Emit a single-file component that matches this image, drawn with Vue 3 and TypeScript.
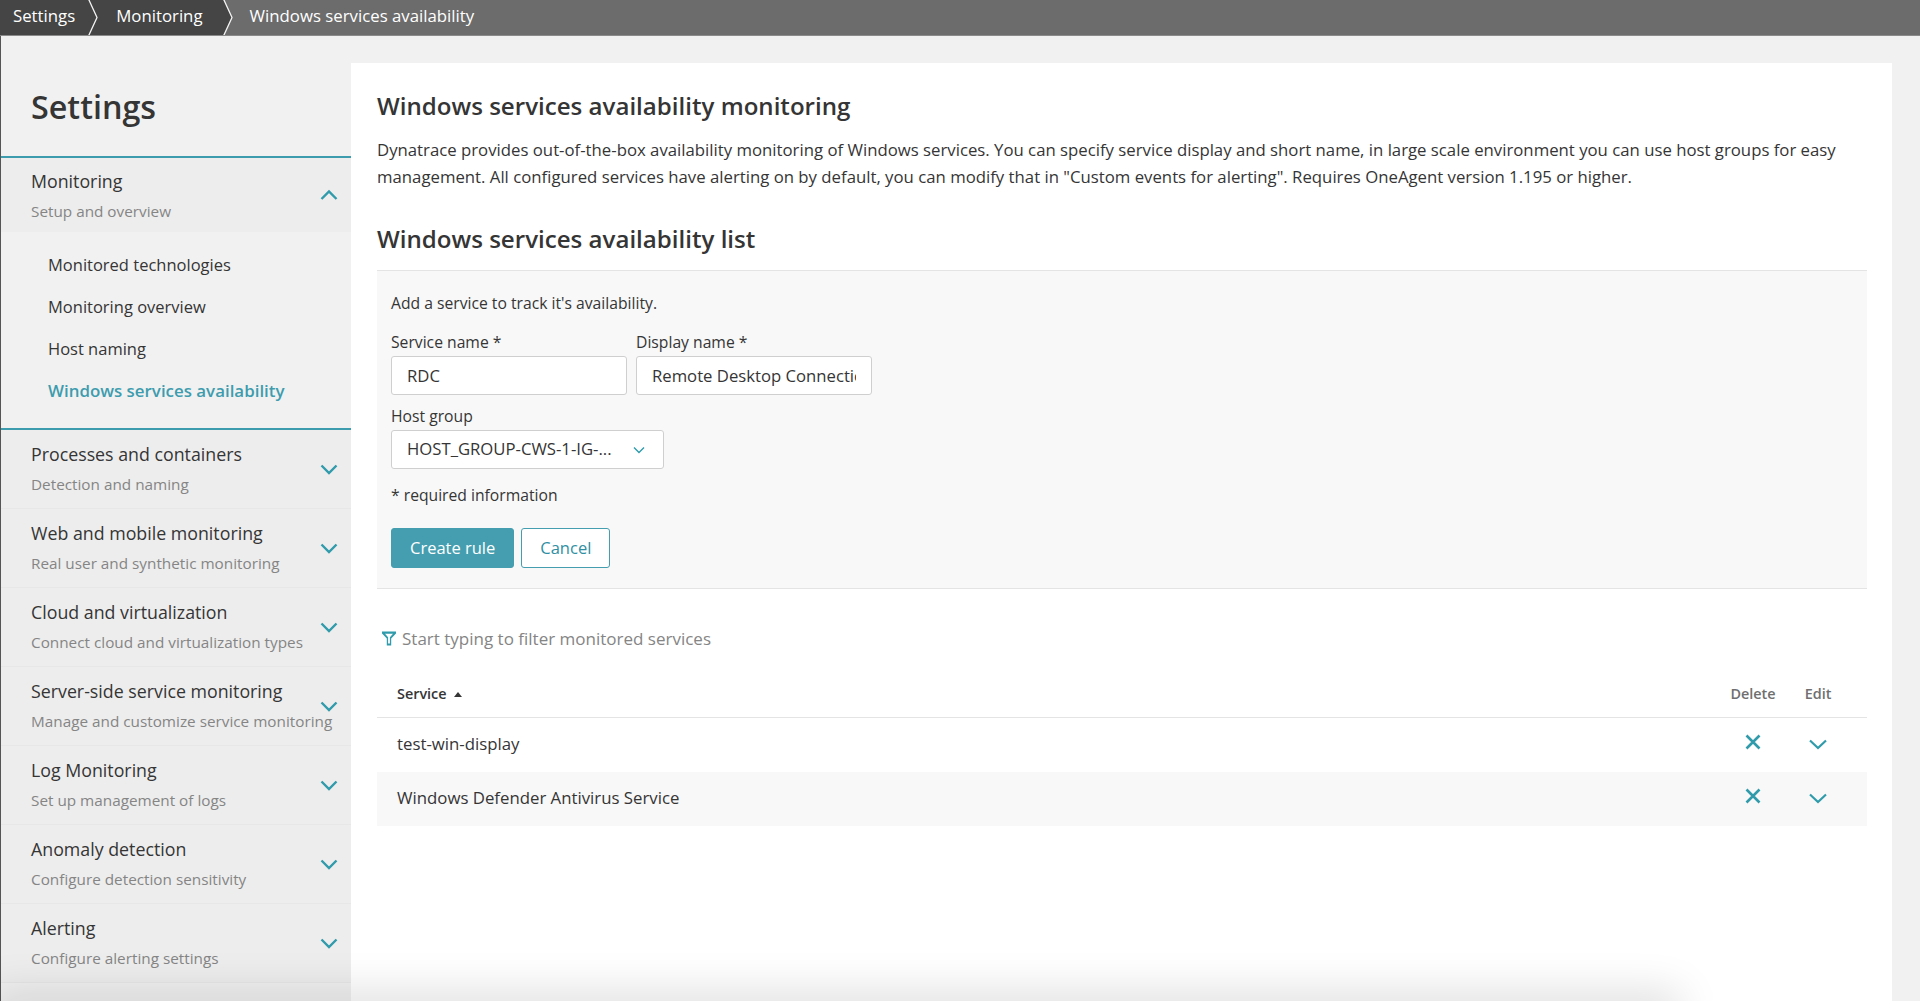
<script setup lang="ts">
interface NavGroup {
  title: string
  sub: string
}

const navLinks = ['Monitored technologies', 'Monitoring overview', 'Host naming', 'Windows services availability']

const navGroups: NavGroup[] = [
  { title: 'Processes and containers', sub: 'Detection and naming' },
  { title: 'Web and mobile monitoring', sub: 'Real user and synthetic monitoring' },
  { title: 'Cloud and virtualization', sub: 'Connect cloud and virtualization types' },
  { title: 'Server-side service monitoring', sub: 'Manage and customize service monitoring' },
  { title: 'Log Monitoring', sub: 'Set up management of logs' },
  { title: 'Anomaly detection', sub: 'Configure detection sensitivity' },
  { title: 'Alerting', sub: 'Configure alerting settings' },
]

const services = ['test-win-display', 'Windows Defender Antivirus Service']
</script>

<template>
  <div class="page">
    <header class="topbar">
      <span class="crumb first">Settings</span>
      <svg class="crumb-arrow dark" width="12" height="35" viewBox="0 0 12 35">
        <path d="M0 0H2.500L11 17.500L2.500 35H0Z" fill="#454545" />
        <path d="M2.500 -1L11 17.500L2.500 36" fill="none" stroke="#f4f4f4" stroke-width="1.300" />
      </svg>
      <span class="crumb second">Monitoring</span>
      <svg class="crumb-arrow" width="12" height="35" viewBox="0 0 12 35">
        <path d="M0 0H2.500L11 17.500L2.500 35H0Z" fill="#454545" />
        <path d="M2.500 -1L11 17.500L2.500 36" fill="none" stroke="#f4f4f4" stroke-width="1.300" />
      </svg>
      <span class="crumb current">Windows services availability</span>
    </header>

    <div class="content">
      <aside class="sidebar">
        <h1 class="side-title">Settings</h1>

        <section class="nav-open">
          <div class="nav-item active">
            <div class="nav-text">
              <div class="nav-title">Monitoring</div>
              <div class="nav-sub">Setup and overview</div>
            </div>
            <svg class="nav-chev" width="18" height="12" viewBox="0 0 18 12">
              <path d="M1.500 10L9 2.500L16.500 10" fill="none" stroke="#2f9bab" stroke-width="2.400" />
            </svg>
          </div>
          <ul class="nav-links">
            <li v-for="(link, i) in navLinks" :key="link" :class="{ selected: i === 3 }">{{ link }}</li>
          </ul>
        </section>

        <div v-for="group in navGroups" :key="group.title" class="nav-item">
          <div class="nav-text">
            <div class="nav-title">{{ group.title }}</div>
            <div class="nav-sub">{{ group.sub }}</div>
          </div>
          <svg class="nav-chev" width="18" height="12" viewBox="0 0 18 12">
            <path d="M1.500 2.500L9 10L16.500 2.500" fill="none" stroke="#2f9bab" stroke-width="2.400" />
          </svg>
        </div>
      </aside>

      <main class="panel">
        <h2 class="heading first">Windows services availability monitoring</h2>
        <p class="intro">
          Dynatrace provides out-of-the-box availability monitoring of Windows services. You can specify service display and short name, in large scale environment you can use host groups for easy management. All configured services have alerting on by default, you can modify that in "Custom events for alerting". Requires OneAgent version 1.195 or higher.
        </p>
        <h2 class="heading second">Windows services availability list</h2>

        <form class="rule-form" @submit.prevent>
          <p class="form-hint">Add a service to track it's availability.</p>
          <div class="field-row">
            <label class="field">
              <span class="field-label">Service name *</span>
              <input class="input name-input" value="RDC" readonly />
            </label>
            <label class="field">
              <span class="field-label">Display name *</span>
              <input class="input display-input" value="Remote Desktop Connection" readonly />
            </label>
          </div>
          <div class="field host-field">
            <span class="field-label">Host group</span>
            <span class="input select">
              <span>HOST_GROUP-CWS-1-IG-...</span>
              <svg width="12" height="8" viewBox="0 0 12 8">
                <path d="M1 1.500L6 6.500L11 1.500" fill="none" stroke="#2f9bab" stroke-width="1.400" />
              </svg>
            </span>
          </div>
          <p class="required">* required information</p>
          <div class="actions">
            <button class="btn primary" type="button">Create rule</button>
            <button class="btn" type="button">Cancel</button>
          </div>
        </form>

        <div class="filter">
          <svg width="16" height="15" viewBox="0 0 16 15">
            <path d="M1 0.500H15V2.500L10.200 7.500V14.500H5.800V7.500L1 2.500Z" fill="#2f9bab" />
            <path d="M4 2.800H12L8.900 6.200V12.500H7.100V6.200Z" fill="#fff" />
          </svg>
          <span>Start typing to filter monitored services</span>
        </div>

        <div class="table-head">
          <span class="col-service">Service <i class="sort" /></span>
          <span class="col-delete">Delete</span>
          <span class="col-edit">Edit</span>
        </div>
        <div v-for="(service, i) in services" :key="service" class="table-row" :class="{ odd: i === 1 }">
          <span class="col-service">{{ service }}</span>
          <span class="col-delete">
            <svg class="delete-x" width="16" height="16" viewBox="0 0 16 16">
              <path d="M1.500 1.500L14.500 14.500M14.500 1.500L1.500 14.500" fill="none" stroke="#2f9bab" stroke-width="2.600" />
            </svg>
          </span>
          <span class="col-edit">
            <svg class="edit-chev" width="18" height="11" viewBox="0 0 18 11">
              <path d="M1 1.500L9 9L17 1.500" fill="none" stroke="#2f9bab" stroke-width="2.200" />
            </svg>
          </span>
        </div>
      </main>
    </div>

    <div class="fade" />
  </div>
</template>

<style>
html,
body {
  margin: 0;
  background: #f1f1f1;
}
</style>

<style scoped>
.page {
  position: relative;
  height: 1001px;
  overflow: hidden;
  display: flex;
  flex-direction: column;
  font-family: "Open Sans", "Noto Sans", sans-serif;
  color: #353535;
  background: #f1f1f1;
}

.topbar {
  flex: none;
  display: flex;
  align-items: center;
  height: 35px;
  background: #6c6c6c;
  border-bottom: 1px solid #8a8a8a;
  color: #fff;
  font-size: 16.800px;
}

.crumb {
  height: 35px;
  line-height: 32px;
  background: #454545;
}

.crumb.first {
  padding: 0 11px 0 13px;
}

.crumb.second {
  padding: 0 18px 0 18px;
}

.crumb-arrow {
  flex: none;
}

.crumb-arrow.dark {
  background: #454545;
}

.crumb.current {
  background: none;
  padding-left: 17px;
}

.content {
  flex: 1;
  display: flex;
  min-height: 0;
  border-left: 1.500px solid #555;
}

.sidebar {
  flex: none;
  width: 350px;
}

.side-title {
  margin: 0;
  padding: 49px 0 0 30px;
  height: 71px;
  line-height: 42px;
  font-size: 32.300px;
  font-weight: 600;
  color: #353535;
}

.nav-open {
  border-top: 2px solid #3d9cae;
  border-bottom: 2px solid #3d9cae;
}

.nav-item {
  display: flex;
  align-items: center;
  justify-content: space-between;
  height: 78px;
  padding: 0 13px 0 30px;
  background: #ededed;
  border-bottom: 1px solid #e7e7e7;
}

.nav-item.active {
  height: 74px;
  border-bottom: 0;
}

.nav-item.active .nav-text {
  padding-top: 1px;
}

.nav-text {
  flex: 1;
  width: 0;
}

.nav-chev {
  flex: none;
}

.nav-title {
  font-size: 17.800px;
  line-height: 24px;
  color: #353535;
  margin-top: -1px;
}

.nav-sub {
  margin-top: 7px;
  font-size: 15.300px;
  line-height: 22px;
  color: #858585;
  white-space: nowrap;
}

.nav-links {
  list-style: none;
  margin: 0;
  padding: 12px 0 16px 47px;
  font-size: 16.500px;
}

.nav-links li {
  height: 42px;
  line-height: 42px;
}

.nav-links li.selected {
  font-weight: 600;
  color: #3d9cae;
  font-size: 16.900px;
}

.panel {
  flex: none;
  width: 1541px;
  box-sizing: border-box;
  margin-top: 27px;
  padding: 0 25px 0 26px;
  background: #fff;
}

.heading {
  margin: 0;
  font-size: 24.100px;
  font-weight: 600;
  line-height: 32px;
  color: #353535;
}

.heading.first {
  padding-top: 27px;
}

.heading.second {
  padding-top: 33px;
  padding-bottom: 15px;
  border-bottom: 1px solid #e4e4e4;
}

.intro {
  margin: 14px 0 0;
  font-size: 16.750px;
  line-height: 27px;
}

.rule-form {
  background: #f8f8f8;
  border-bottom: 1px solid #e4e4e4;
  height: 318px;
  padding: 20px 14px 0 14px;
  box-sizing: border-box;
}

.form-hint {
  margin: 0;
  font-size: 15.700px;
  line-height: 24px;
}

.field-row {
  display: flex;
  gap: 9px;
  margin-top: 15px;
}

.field {
  display: block;
}

.field-label {
  display: block;
  font-size: 15.700px;
  line-height: 24px;
  margin-bottom: 2px;
}

.input {
  display: flex;
  align-items: center;
  box-sizing: border-box;
  height: 39px;
  padding: 0 15px;
  background: #fff;
  border: 1px solid #cfcfcf;
  border-radius: 3px;
  font-family: inherit;
  font-size: 16.700px;
  color: #353535;
  outline: none;
}

.name-input,
.display-input {
  width: 236px;
}

.host-field {
  margin-top: 9px;
}

.select {
  width: 273px;
  justify-content: space-between;
  padding-right: 18px;
  white-space: nowrap;
}

.select span {
  margin-top: -2px;
}

.required {
  margin: 14px 0 0;
  font-size: 15.700px;
  line-height: 24px;
}

.actions {
  display: flex;
  gap: 7px;
  margin-top: 21px;
}

.btn {
  height: 40px;
  padding: 0 18px 2px;
  font: inherit;
  font-size: 16.500px;
  color: #2f8fa3;
  background: #fff;
  border: 1px solid #449eb0;
  border-radius: 3px;
}

.btn.primary {
  color: #fff;
  background: #449eb0;
}

.filter {
  display: flex;
  align-items: center;
  gap: 5px;
  height: 50px;
  margin-top: 24px;
  padding-left: 4px;
  font-size: 17px;
  color: #858585;
}

.table-head,
.table-row {
  display: flex;
  align-items: center;
}

.table-head {
  height: 47px;
  margin-top: 6px;
  padding-top: 1px;
  border-bottom: 1.500px solid #e4e4e4;
  font-size: 14.400px;
  font-weight: 600;
  color: #6f6f6f;
}

.table-head .col-service {
  color: #353535;
}

.table-row {
  box-sizing: border-box;
  height: 54px;
  padding-bottom: 4px;
  font-size: 16.800px;
}

.table-row.odd {
  background: #f8f8f8;
}

.col-service {
  flex: 1;
  padding-left: 20px;
}

.sort {
  display: inline-block;
  margin-left: 4px;
  vertical-align: 2px;
  border-left: 4px solid transparent;
  border-right: 4px solid transparent;
  border-bottom: 5px solid #353535;
}

.col-delete {
  display: flex;
  justify-content: center;
  width: 60px;
  margin-right: 10px;
}

.delete-x {
  margin-top: -2px;
}

.col-edit {
  display: flex;
  justify-content: center;
  width: 50px;
  margin-right: 24px;
}

.edit-chev {
  margin-top: 3px;
}

.fade {
  position: absolute;
  left: 0;
  right: 250px;
  bottom: -20px;
  height: 20px;
  box-shadow: 0 0 42px 10px rgba(0, 0, 0, 0.13);
  pointer-events: none;
}
</style>
